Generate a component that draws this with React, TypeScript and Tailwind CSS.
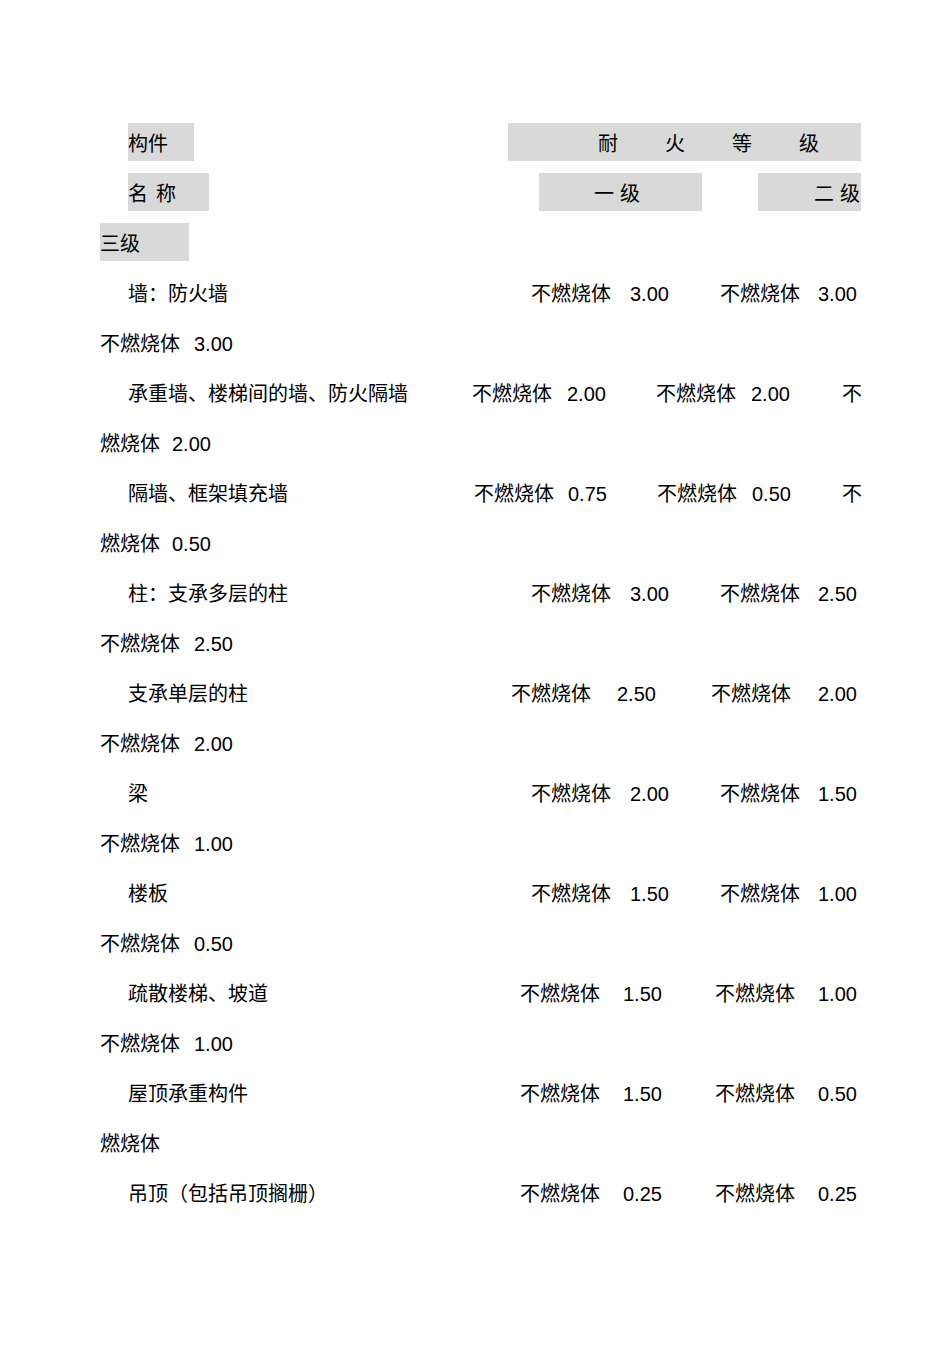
import React from "react";

const font = { fontFamily: '"Liberation Sans", "Noto Sans CJK SC", sans-serif' };

function C({ w = "", children }: { w?: string; children?: React.ReactNode }) {
  return <span className={`${w} shrink-0 whitespace-nowrap`}>{children}</span>;
}

function Row({ children }: { children: React.ReactNode }) {
  return <div className="flex h-[50px] items-center pl-[100px]">{children}</div>;
}

type Line = [string, string][];

// main rows: [width class, text]
const rows: { main: Line; cont: Line }[] = [
  {
    main: [["w-[403px]", "墙：防火墙"], ["w-[99px]", "不燃烧体"], ["w-[90px]", "3.00"], ["w-[98px]", "不燃烧体"], ["", "3.00"]],
    cont: [["w-[94px]", "不燃烧体"], ["", "3.00"]],
  },
  {
    main: [["w-[344px]", "承重墙、楼梯间的墙、防火隔墙"], ["w-[95px]", "不燃烧体"], ["w-[89px]", "2.00"], ["w-[95px]", "不燃烧体"], ["w-[91px]", "2.00"], ["", "不"]],
    cont: [["w-[72px]", "燃烧体"], ["", "2.00"]],
  },
  {
    main: [["w-[346px]", "隔墙、框架填充墙"], ["w-[94px]", "不燃烧体"], ["w-[89px]", "0.75"], ["w-[95px]", "不燃烧体"], ["w-[90px]", "0.50"], ["", "不"]],
    cont: [["w-[72px]", "燃烧体"], ["", "0.50"]],
  },
  {
    main: [["w-[403px]", "柱：支承多层的柱"], ["w-[99px]", "不燃烧体"], ["w-[90px]", "3.00"], ["w-[98px]", "不燃烧体"], ["", "2.50"]],
    cont: [["w-[94px]", "不燃烧体"], ["", "2.50"]],
  },
  {
    main: [["w-[383px]", "支承单层的柱"], ["w-[106px]", "不燃烧体"], ["w-[94px]", "2.50"], ["w-[107px]", "不燃烧体"], ["", "2.00"]],
    cont: [["w-[94px]", "不燃烧体"], ["", "2.00"]],
  },
  {
    main: [["w-[403px]", "梁"], ["w-[99px]", "不燃烧体"], ["w-[90px]", "2.00"], ["w-[98px]", "不燃烧体"], ["", "1.50"]],
    cont: [["w-[94px]", "不燃烧体"], ["", "1.00"]],
  },
  {
    main: [["w-[403px]", "楼板"], ["w-[99px]", "不燃烧体"], ["w-[90px]", "1.50"], ["w-[98px]", "不燃烧体"], ["", "1.00"]],
    cont: [["w-[94px]", "不燃烧体"], ["", "0.50"]],
  },
  {
    main: [["w-[392px]", "疏散楼梯、坡道"], ["w-[103px]", "不燃烧体"], ["w-[92px]", "1.50"], ["w-[103px]", "不燃烧体"], ["", "1.00"]],
    cont: [["w-[94px]", "不燃烧体"], ["", "1.00"]],
  },
  {
    main: [["w-[392px]", "屋顶承重构件"], ["w-[103px]", "不燃烧体"], ["w-[92px]", "1.50"], ["w-[103px]", "不燃烧体"], ["", "0.50"]],
    cont: [["", "燃烧体"]],
  },
  {
    main: [["w-[392px]", "吊顶（包括吊顶搁栅）"], ["w-[103px]", "不燃烧体"], ["w-[92px]", "0.25"], ["w-[103px]", "不燃烧体"], ["", "0.25"]],
    cont: [],
  },
];

export default function App() {
  return (
    <div className="min-h-[1345px] w-[950px] bg-white pt-[119px] text-[20px] leading-none text-black" style={font}>
      {/* header: 构件 / 耐火等级 */}
      <Row>
        <C w="w-[28px]" />
        <div className="mb-[4px] flex h-[38px] w-[66px] shrink-0 items-center bg-[#d9d9d9] pt-[4px]">构件</div>
        <C w="w-[314px]" />
        <div className="mb-[4px] flex h-[38px] w-[353px] shrink-0 items-center bg-[#d9d9d9] pl-[90px] pt-[4px]">
          <C w="w-[67px]">耐</C>
          <C w="w-[67px]">火</C>
          <C w="w-[67px]">等</C>
          <C>级</C>
        </div>
      </Row>
      <Row>
        <C w="w-[28px]" />
        <div className="mb-[4px] flex h-[38px] w-[81px] shrink-0 items-center bg-[#d9d9d9] pt-[4px]">
          <C w="w-[28px]">名</C>
          <C>称</C>
        </div>
        <C w="w-[330px]" />
        <div className="mb-[4px] flex h-[38px] w-[163px] shrink-0 items-center bg-[#d9d9d9] pl-[55px] pt-[4px]">
          <C w="w-[26px]">一</C>
          <C>级</C>
        </div>
        <C w="w-[56px]" />
        <div className="mb-[4px] flex h-[38px] w-[103px] shrink-0 items-center bg-[#d9d9d9] pl-[56px] pt-[4px]">
          <C w="w-[26px]">二</C>
          <C>级</C>
        </div>
      </Row>
      <Row>
        <div className="mb-[4px] flex h-[38px] w-[89px] shrink-0 items-center bg-[#d9d9d9] pt-[4px]">三级</div>
      </Row>

      {rows.map((r, i) => (
        <React.Fragment key={i}>
          <Row>
            <C w="w-[28px]" />
            {r.main.map(([w, t], j) => (
              <C key={j} w={w}>
                {t}
              </C>
            ))}
          </Row>
          {r.cont.length > 0 && (
            <Row>
              {r.cont.map(([w, t], j) => (
                <C key={j} w={w}>
                  {t}
                </C>
              ))}
            </Row>
          )}
        </React.Fragment>
      ))}
    </div>
  );
}
